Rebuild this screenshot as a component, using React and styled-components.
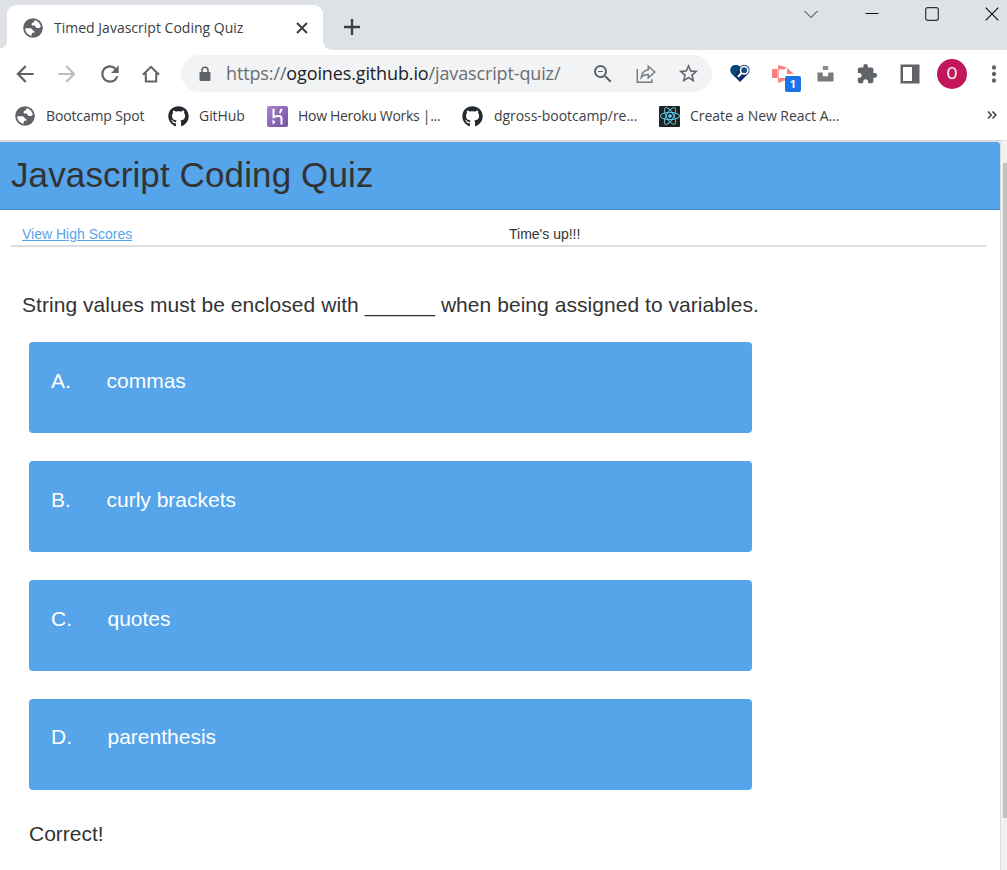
import React from "react";
import styled, { createGlobalStyle } from "styled-components";
import { MdArrowBack, MdArrowForward, MdRefresh, MdZoomOut, MdStarBorder, MdExtension, MdMoreVert } from "react-icons/md";
import { FaGithub, FaReact } from "react-icons/fa";

const GlobalStyle = createGlobalStyle`
  * { box-sizing: border-box; }
  html, body { margin: 0; height: 100%; overflow: hidden; background: #fff; }
  svg { display: block; flex: none; }
`;

const Window = styled.div`
  width: 1007px;
  height: 870px;
  display: flex;
  flex-direction: column;
  overflow: hidden;
  font-family: "Open Sans", "Noto Sans", sans-serif;
  color: #3c4043;
`;

const TabStrip = styled.div`
  height: 50px;
  flex: none;
  display: flex;
  align-items: flex-end;
  background: #dee1e6;
`;

const TabFoot = styled.div`
  width: ${(p) => (p.$right ? 9 : 7)}px;
  height: 9px;
  flex: none;
  background: radial-gradient(circle at ${(p) => (p.$right ? "100%" : "0")} 0, #dee1e6 ${(p) => (p.$right ? 8.5 : 7)}px, #fff ${(p) => (p.$right ? 9 : 7.5)}px);
`;

const Tab = styled.div`
  width: 316px;
  height: 45px;
  display: flex;
  align-items: center;
  padding: 0 12px 0 16px;
  background: #fff;
  border-radius: 9px 9px 0 0;
`;

const TabTitle = styled.span`
  flex: 1;
  margin-left: 11px;
  font-size: 14px;
  line-height: 20px;
  letter-spacing: 0.01px;
  white-space: nowrap;
`;

const NewTab = styled.div`
  align-self: center;
  margin: 4px 0 0 11px;
`;

const WindowControls = styled.div`
  align-self: flex-start;
  display: flex;
  align-items: center;
  height: 28px;
  margin-left: auto;
  gap: 46px;
  padding-right: 8px;
`;

const Toolbar = styled.div`
  height: 47px;
  flex: none;
  display: flex;
  align-items: center;
  padding-left: 13px;
`;

const IconSlot = styled.div`
  width: ${(p) => p.$w}px;
  height: 30px;
  flex: none;
  display: flex;
  align-items: center;
  justify-content: center;
  color: ${(p) => p.$color || "#5f6368"};
`;

const AddressBar = styled.div`
  width: 531px;
  height: 37px;
  margin-left: 2px;
  flex: none;
  display: flex;
  align-items: center;
  padding-left: 16px;
  border-radius: 19px;
  background: #f1f3f4;
`;

const Url = styled.span`
  width: 361px;
  margin: -1px 0 0 13px;
  font-size: 18px;
  line-height: 24px;
  letter-spacing: -0.13px;
  color: #6a6e72;
  white-space: nowrap;
  b { font-weight: 400; color: #202124; }
`;

const BadgedSlot = styled(IconSlot)`
  position: relative;
`;

const CountBadge = styled.span`
  position: absolute;
  left: 17px;
  top: 17px;
  width: 16px;
  height: 16px;
  border-radius: 2px;
  background: #1a73e8;
  color: #fff;
  font-size: 11px;
  font-weight: 700;
  line-height: 16px;
  text-align: center;
`;

const Avatar = styled.div`
  width: 30px;
  height: 30px;
  flex: none;
  border-radius: 50%;
  background: #c2185b;
  color: #fff;
  font: 16px/30px Roboto, sans-serif;
  text-align: center;
`;

const Bookmarks = styled.div`
  height: 43px;
  flex: none;
  display: flex;
  align-items: center;
  padding: 0 10px 5px 15px;
`;

const Bookmark = styled.div`
  width: ${(p) => p.$w}px;
  display: flex;
  align-items: center;
  gap: ${(p) => p.$gap || 10}px;
  font-size: 14px;
  line-height: 20px;
  letter-spacing: ${(p) => p.$track || -0.05}px;
  white-space: nowrap;
`;

const Overflow = styled.div`
  margin-left: auto;
`;

const Viewport = styled.div`
  flex: 1;
  display: flex;
  min-height: 0;
  border-top: 1px solid #dadbdc;
`;

const Page = styled.div`
  width: 1000px;
  border-top: 1px solid #dadbdc;
  font-family: "Liberation Sans", Arial, sans-serif;
  color: #333;
`;

const ScrollTrack = styled.div`
  width: 7px;
  padding: 22px 0 0 2px;
  border-left: 1px solid #dcdcdc;
  background: #f1f1f1;
`;

const ScrollThumb = styled.div`
  height: 655px;
  background: #c1c1c1;
`;

const Banner = styled.header`
  height: 68px;
  padding-left: 11px;
  background: #56a4ea;
  border-bottom: 1px solid #4590d3;
  border-radius: 0 3px 0 0;
`;

const Title = styled.h1`
  margin: 0;
  font-size: 35px;
  font-weight: 400;
  line-height: 66px;
  letter-spacing: 0.12px;
`;

const StatusRow = styled.div`
  height: 37px;
  margin: 0 14px 0 11px;
  padding: 15px 0 0 11px;
  display: flex;
  border-bottom: 2px solid #dedede;
  font-size: 14px;
  line-height: 18px;
`;

const ScoresLink = styled.a`
  width: 487px;
  color: #56a4ea;
  text-decoration: underline;
`;

const Question = styled.p`
  margin: 43px 0 0 22px;
  font-size: 21px;
  line-height: 30px;
  letter-spacing: 0.05px;
  white-space: nowrap;
`;

const Choices = styled.div`
  margin: 22px 0 0 29px;
  display: flex;
  flex-direction: column;
  gap: 28px;
`;

const Choice = styled.div`
  width: 723px;
  height: 91px;
  display: flex;
  padding: ${(p) => p.$top || 24}px 0 0 22px;
  border-radius: 4px;
  background: #56a4ea;
  color: #fff;
  font-size: 21px;
  line-height: 30px;
`;

const Letter = styled.span`
  width: ${(p) => p.$w}px;
`;

const Result = styled.p`
  margin: 29px 0 0 29px;
  font-size: 21px;
  line-height: 30px;
`;

const Globe = () => (
  <svg width="20" height="20" viewBox="0 0 20 20">
    <circle cx="10" cy="10" r="9.8" fill="#5f6368" />
    <path d="M2.200 10.200H6c2.200 0 3.200.5 3.700 1.700.2.700.8.800 1.700.8v2H9.300c-.6.500-.5 1.600-.5 2.900-3.800-.4-6.600-3.500-6.600-7.400Z" fill="#fff" />
    <path d="M11.700 2.200c3.200.7 5.500 3 6.100 6.200-.8 1.200-2 1.800-3.400 1.600-1.300-.1-1.700-.9-2.100-1.800-.4-.8-1.100-.7-2.100-.7-1.200 0-1.700-.7-1.600-1.600.1-1.100 1.300-1.200 2.500-1.300-.1-.9-.1-1.700.6-2.400Z" fill="#fff" />
  </svg>
);

const Lock = () => (
  <svg width="16" height="16" viewBox="0 0 16 16">
    <rect x="2.500" y="6" width="11" height="9" rx="1.200" fill="#5f6368" />
    <path d="M5 7V4.300a3 3 0 0 1 6 0V7" fill="none" stroke="#5f6368" strokeWidth="1.600" />
  </svg>
);

const Home = () => (
  <svg width="18" height="18" viewBox="0 0 18 18" fill="none" stroke="#5f6368" strokeWidth="2">
    <path d="M1 9.800 9 1.800l8 8M3.800 8v8.500h10.400V8" />
  </svg>
);

const Share = () => (
  <svg width="20" height="20" viewBox="0 0 20 20" fill="none" stroke="#777a7d" strokeWidth="1.500">
    <path d="M1.300 5v13.200h14.500v-3" />
    <path d="M12.300 2.200 18.800 8l-6.500 5.800v-3.200c-3 0-5.400.9-7 3 .3-4.200 2.900-7.200 7-7.800Z" strokeLinejoin="miter" />
  </svg>
);

const HeartSearch = () => (
  <svg width="20" height="19" viewBox="0 0 20 19">
    <path d="M10 18 1.600 9.500C.1 7.800.1 4.500 1.600 2.700 3.700.4 7.600.3 10 2.800c2.500-2.500 6.300-2.400 8.400-.1 1.500 1.800 1.500 5.100 0 6.800Z" fill="#092d68" />
    <path d="M1.600 2.700C3.700.4 7.600.3 10 2.800L4.500 12.400 1.600 9.500C.1 7.800.1 4.500 1.600 2.700Z" fill="#074b7c" />
    <circle cx="14.200" cy="6.200" r="3.700" fill="#174d82" stroke="#fff" strokeWidth="1.600" />
    <path d="m11.500 9-3.500 4" stroke="#fff" strokeWidth="2" />
  </svg>
);

const PinkArrows = () => (
  <svg width="22" height="18" viewBox="0 0 22 18" fill="#f98181">
    <path d="M0 4h6v9H0zM6 0l9 2.500-3 2H6zM6 13h6l2 2-8 3zM15 3l7 6h-7z" />
    <path d="M6 5h6v8H6z" fill="#fff" />
    <path d="M5 4.500h2v8H5z" fill="#ffabab" />
  </svg>
);

const Unsplash = () => (
  <svg width="17" height="17" viewBox="0 0 17 17" fill="#77797b">
    <path d="M5.800 1h5.400v4H5.800z" fill="#8a8c8e" />
    <path d="M.500 7.500h5.300v3.700h5.400V7.500h5.300v9H.500z" />
  </svg>
);

const SidePanel = () => (
  <svg width="20" height="20" viewBox="0 0 20 20">
    <path fill="#5f6368" fillRule="evenodd" d="M.500.500h19v19H.500ZM3 3v14h9V3Z" />
  </svg>
);

const Heroku = () => (
  <svg width="21" height="21" viewBox="0 0 21 21">
    <defs>
      <linearGradient id="heroku" x2="1" y2="1">
        <stop stopColor="#a782cd" />
        <stop offset="1" stopColor="#74509f" />
      </linearGradient>
    </defs>
    <rect width="21" height="21" rx="2" fill="url(#heroku)" />
    <path d="M6.500 2.800v8.400c2-.9 3.500-1.300 5.400-1.300 2 0 2.600 1 2.600 2.500v6M14.500 2.800c-.1 1.700-.8 3-1.900 4.200" fill="none" stroke="#fff" strokeWidth="2" />
    <path d="m5.500 13.500 3 2.500-3 2.500z" fill="#fff" />
  </svg>
);

const ReactLogo = styled.div`
  width: 21px;
  height: 21px;
  display: flex;
  align-items: center;
  justify-content: center;
  border-radius: 1px;
  background: #222;
  color: #61dafb;
`;

const choices = [
  { letter: "A.", text: "commas", w: 55.5 },
  { letter: "B.", text: "curly brackets", w: 55.5 },
  { letter: "C.", text: "quotes", w: 56.5 },
  { letter: "D.", text: "parenthesis", w: 56.5, top: 23 },
];

export default function App() {
  return (
    <Window>
      <GlobalStyle />
      <TabStrip>
        <TabFoot />
        <Tab>
          <Globe />
          <TabTitle>Timed Javascript Coding Quiz</TabTitle>
          <svg width="18" height="18" viewBox="0 0 18 18" stroke="#3c4043" strokeWidth="2"><path d="m4 4 10 10M14 4 4 14" /></svg>
        </Tab>
        <TabFoot $right />
        <NewTab>
          <svg width="18" height="18" viewBox="0 0 18 18" stroke="#3c4043" strokeWidth="2.400"><path d="M1 9h16M9 1v16" /></svg>
        </NewTab>
        <WindowControls>
          <svg width="16" height="14" viewBox="0 0 16 14" fill="none" stroke="#222"><path d="m1.500 4 6.500 6.500L14.500 4" /></svg>
          <svg width="14" height="14" viewBox="0 0 14 14" stroke="#111"><path d="M.500 6.500h13" /></svg>
          <svg width="14" height="14" viewBox="0 0 14 14" fill="none" stroke="#333" strokeWidth="1.200"><rect x=".7" y=".7" width="12.600" height="12.600" rx="2" /></svg>
          <svg width="14" height="14" viewBox="0 0 14 14" stroke="#111" strokeWidth="1.200"><path d="m.700.700 12.600 12.600M13.300.700.700 13.300" /></svg>
        </WindowControls>
      </TabStrip>

      <Toolbar>
        <IconSlot $w={24}><MdArrowBack size={26} /></IconSlot>
        <IconSlot $w={60} $color="#babcbe"><MdArrowForward size={26} /></IconSlot>
        <IconSlot $w={25}><MdRefresh size={26} /></IconSlot>
        <IconSlot $w={57}><Home /></IconSlot>
        <AddressBar>
          <Lock />
          <Url>https://<b>ogoines.github.io</b>/javascript-quiz/</Url>
          <IconSlot $w={32}><MdZoomOut size={24} /></IconSlot>
          <IconSlot $w={54}><Share /></IconSlot>
          <IconSlot $w={30}><MdStarBorder size={23} /></IconSlot>
        </AddressBar>
        <IconSlot $w={56}><HeartSearch /></IconSlot>
        <BadgedSlot $w={30}>
          <PinkArrows />
          <CountBadge>1</CountBadge>
        </BadgedSlot>
        <IconSlot $w={54}><Unsplash /></IconSlot>
        <IconSlot $w={30}><MdExtension size={22} /></IconSlot>
        <IconSlot $w={55}><SidePanel /></IconSlot>
        <Avatar>O</Avatar>
        <IconSlot $w={53}><MdMoreVert size={26} /></IconSlot>
      </Toolbar>

      <Bookmarks>
        <Bookmark $w={153} $gap={11} $track={-0.14}><Globe />Bootcamp Spot</Bookmark>
        <Bookmark $w={99}><FaGithub size={21} color="#24292f" />GitHub</Bookmark>
        <Bookmark $w={195} $track={-0.3}><Heroku />How Heroku Works |...</Bookmark>
        <Bookmark $w={197} $gap={11}><FaGithub size={21} color="#24292f" />dgross-bootcamp/re...</Bookmark>
        <Bookmark $w={190}><ReactLogo><FaReact size={20} /></ReactLogo>Create a New React A...</Bookmark>
        <Overflow>
          <svg width="10" height="10" viewBox="0 0 10 10" fill="none" stroke="#4b4e52" strokeWidth="1.700"><path d="m1 .500 3.300 3.500L1 7.500M5.500.500 8.800 4 5.500 7.500" /></svg>
        </Overflow>
      </Bookmarks>

      <Viewport>
        <Page>
          <Banner><Title>Javascript Coding Quiz</Title></Banner>
          <StatusRow>
            <ScoresLink>View High Scores</ScoresLink>
            <span>Time's up!!!</span>
          </StatusRow>
          <Question>String values must be enclosed with ______ when being assigned to variables.</Question>
          <Choices>
            {choices.map((c) => (
              <Choice key={c.letter} $top={c.top}>
                <Letter $w={c.w}>{c.letter}</Letter>
                <span>{c.text}</span>
              </Choice>
            ))}
          </Choices>
          <Result>Correct!</Result>
        </Page>
        <ScrollTrack><ScrollThumb /></ScrollTrack>
      </Viewport>
    </Window>
  );
}
